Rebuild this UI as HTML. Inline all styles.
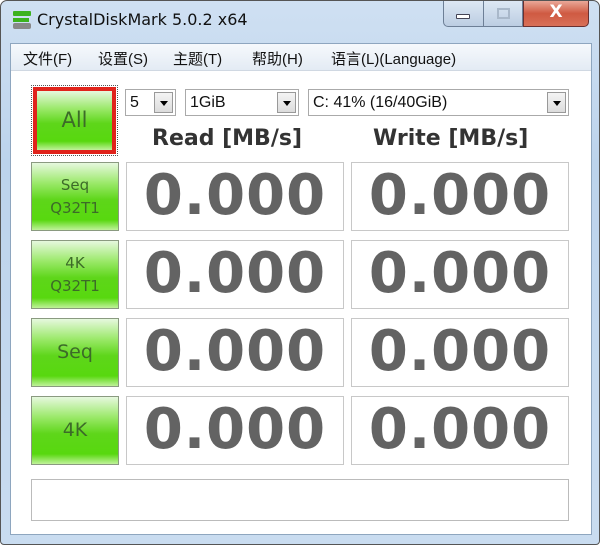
<!DOCTYPE html>
<html><head><meta charset="utf-8"><style>
*{margin:0;padding:0;box-sizing:border-box}
body{width:600px;height:545px;background:#fff;overflow:hidden;font-family:"Liberation Sans","Noto Sans CJK SC",sans-serif;position:relative}
.frame{position:absolute;left:0;top:0;width:600px;height:545px;border:1px solid #555;border-radius:7px 7px 4px 4px;background:linear-gradient(180deg,#cfe0f2 0%,#bcd3ec 30%,#c9dcf0 100%)}
.title{position:absolute;left:36px;top:9px;font-size:16px;color:#111;font-family:"DejaVu Sans",sans-serif}
.inner{position:absolute;left:9px;top:42px;width:582px;height:492px;border:1px solid #8ea6bf;background:#fff}
.menu{position:absolute;left:0;top:0;width:580px;height:27px;background:linear-gradient(#f6f9fc,#e3ebf4);border-bottom:1px solid #d0d8e2;font-size:15px;color:#111}
.menu span{position:absolute;top:4px}
.abs{position:absolute}
.btn{position:absolute;background:linear-gradient(180deg,#e6f8de 0%,#9be96a 30%,#5ed61a 55%,#58d80f 85%,#c0f29a 100%);border:1px solid #8a9a80;color:#3c6b28;font-family:"DejaVu Sans",sans-serif;text-align:center;font-size:15px}
.box{position:absolute;border:1px solid #c8c8c8;background:#fff;text-align:center;font-family:"DejaVu Sans",sans-serif;font-weight:bold;color:#636363;font-size:56px;line-height:66px;letter-spacing:1px}
.combo{position:absolute;border:1px solid #aaa;background:#fff;height:27px;font-size:16px;line-height:25px;padding-left:4px;color:#111}
.combo i{position:absolute;right:2px;top:2px;width:19px;height:21px;border:1px solid #999;background:linear-gradient(#f4f4f4,#dcdcdc)}
.combo i:after{content:"";position:absolute;left:5px;top:8px;border-left:4px solid transparent;border-right:4px solid transparent;border-top:5px solid #000}
.hdr{position:absolute;top:126px;font-family:"DejaVu Sans",sans-serif;font-weight:bold;font-size:22px;color:#333}
</style></head><body>
<div class="frame">
 <div class="abs" style="left:12px;top:10px;width:18px;height:5px;background:#3cb21e;border-radius:1px"></div>
 <div class="abs" style="left:12px;top:17px;width:16px;height:4px;background:#3cb21e"></div>
 <div class="abs" style="left:12px;top:22px;width:18px;height:6px;background:#888;border-radius:2px"></div>
 <div class="title">CrystalDiskMark 5.0.2 x64</div>
 <div class="abs" style="left:442px;top:0;width:80px;height:26px;border:1px solid #6d7f96;border-top:none;border-radius:0 0 0 5px;background:linear-gradient(#dde8f4,#bccde2)"></div>
 <div class="abs" style="left:482px;top:0;width:1px;height:26px;background:#6d7f96"></div>
 <div class="abs" style="left:455px;top:13px;width:14px;height:5px;border:1px solid #445;background:#fff;border-radius:1px"></div>
 <div class="abs" style="left:496px;top:7px;width:13px;height:11px;border:2px solid #a9b8ca"></div>
 <div class="abs" style="left:522px;top:0;width:66px;height:26px;border:1px solid #6a3030;border-top:none;border-radius:0 0 5px 0;background:linear-gradient(#eaa898,#cf5a42 50%,#d87058);color:#fff;font-weight:bold;font-size:17px;text-align:center;line-height:22px;font-family:'DejaVu Sans',sans-serif">X</div>
 <div class="inner">
  <div class="menu">
   <span style="left:12px">文件(F)</span><span style="left:87px">设置(S)</span><span style="left:162px">主题(T)</span><span style="left:241px">帮助(H)</span><span style="left:320px">语言(L)(Language)</span>
  </div>
 </div>
</div>
<div class="abs" style="left:31px;top:85px;width:87px;height:71px;border:1px dotted #555"></div>
<div class="btn" style="left:33px;top:87px;width:83px;height:67px;border:4px solid #e0231b;font-size:21px;line-height:59px">All</div>
<div class="combo" style="left:125px;top:89px;width:51px">5<i></i></div>
<div class="combo" style="left:185px;top:89px;width:114px">1GiB<i></i></div>
<div class="combo" style="left:308px;top:89px;width:261px">C: 41% (16/40GiB)<i></i></div>
<div class="hdr" style="left:152px">Read [MB/s]</div>
<div class="hdr" style="left:373px">Write [MB/s]</div>

<div class="btn" style="left:31px;top:162px;width:88px;height:69px;line-height:23px;padding-top:11px">Seq<br>Q32T1</div>
<div class="box" style="left:126px;top:162px;width:218px;height:69px">0.000</div>
<div class="box" style="left:351px;top:162px;width:218px;height:69px">0.000</div>

<div class="btn" style="left:31px;top:240px;width:88px;height:69px;line-height:23px;padding-top:11px">4K<br>Q32T1</div>
<div class="box" style="left:126px;top:240px;width:218px;height:69px">0.000</div>
<div class="box" style="left:351px;top:240px;width:218px;height:69px">0.000</div>

<div class="btn" style="left:31px;top:318px;width:88px;height:69px;line-height:67px;font-size:19px">Seq</div>
<div class="box" style="left:126px;top:318px;width:218px;height:69px">0.000</div>
<div class="box" style="left:351px;top:318px;width:218px;height:69px">0.000</div>

<div class="btn" style="left:31px;top:396px;width:88px;height:69px;line-height:67px;font-size:19px">4K</div>
<div class="box" style="left:126px;top:396px;width:218px;height:69px">0.000</div>
<div class="box" style="left:351px;top:396px;width:218px;height:69px">0.000</div>

<div class="abs" style="left:31px;top:479px;width:538px;height:42px;border:1px solid #bbb;background:#fff"></div>
</body></html>
